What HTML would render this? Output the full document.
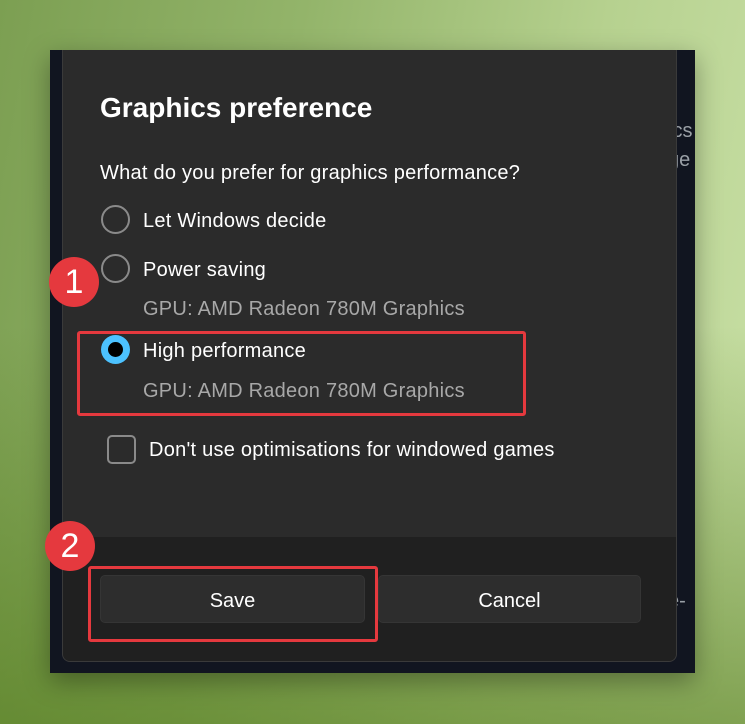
<!DOCTYPE html>
<html><head><style>
*{margin:0;padding:0;box-sizing:border-box}
body{width:745px;height:724px;overflow:hidden;position:relative;font-family:"Liberation Sans",sans-serif;
background:linear-gradient(100deg,#7c9f52 0%,#93b46a 35%,#b6d18f 70%,#c9e0a6 100%);}
.bg2{position:absolute;inset:0;background:linear-gradient(180deg,rgba(0,0,0,0) 45%,rgba(80,120,25,.6) 100%)}
.win{position:absolute;left:50px;top:50px;width:645px;height:623px;background:#111520;box-shadow:0 8px 24px rgba(0,0,0,.35)}
.side{position:absolute;color:#9aa0a6;font-size:20px;left:668px}
.dlg{position:absolute;left:62px;top:50px;width:615px;height:612px;background:#2b2b2b;border:1px solid #3a3a3a;border-top:none;border-radius:0 0 8px 8px;overflow:hidden}
.foot{position:absolute;left:0;right:0;top:487px;bottom:0;background:#202020}
.t{position:absolute;color:#fff;white-space:nowrap;font-size:20px;letter-spacing:0.25px}
.g{color:#a8a8a8}
.radio{position:absolute;width:29px;height:29px;border:2px solid #8a8a8a;border-radius:50%}
.btn{position:absolute;top:525px;height:48px;background:#2d2d2d;border:1px solid #353535;border-radius:5px;color:#fff;font-size:20px;text-align:center;line-height:50px}
.red{position:absolute;border:3px solid #e5393e;border-radius:3px}
.badge{position:absolute;width:50px;height:50px;border-radius:50%;background:#e5393e;color:#fff;font-size:34px;text-align:center;line-height:50px}
</style></head><body>
<div class="bg2"></div>
<div class="win"></div>
<div class="side" style="top:120px">ics</div>
<div class="side" style="top:149px">ge</div>
<div class="side" style="top:590px">e-</div>
<div class="dlg">
 <div class="t" style="left:37px;top:42px;font-size:28px;font-weight:bold;letter-spacing:0">Graphics preference</div>
 <div class="t" style="left:37px;top:112px">What do you prefer for graphics performance?</div>
 <div class="radio" style="left:38px;top:155px"></div>
 <div class="t" style="left:80px;top:160px">Let Windows decide</div>
 <div class="radio" style="left:38px;top:204px"></div>
 <div class="t" style="left:80px;top:209px">Power saving</div>
 <div class="t g" style="left:80px;top:248px">GPU: AMD Radeon 780M Graphics</div>
 <div class="radio" style="left:38px;top:285px;border:none;background:#4cc2ff"><div style="position:absolute;left:7px;top:7px;width:15px;height:15px;border-radius:50%;background:#000"></div></div>
 <div class="t" style="left:80px;top:290px">High performance</div>
 <div class="t g" style="left:80px;top:330px">GPU: AMD Radeon 780M Graphics</div>
 <div style="position:absolute;left:44px;top:385px;width:29px;height:29px;border:2px solid #8a8a8a;border-radius:5px"></div>
 <div class="t" style="left:86px;top:389px">Don't use optimisations for windowed games</div>
 <div class="foot"></div>
 <div class="btn" style="left:37px;width:265px">Save</div>
 <div class="btn" style="left:315px;width:263px">Cancel</div>
</div>
<div class="red" style="left:77px;top:331px;width:449px;height:85px"></div>
<div class="red" style="left:88px;top:566px;width:290px;height:76px"></div>
<div class="badge" style="left:49px;top:257px">1</div>
<div class="badge" style="left:45px;top:521px">2</div>
</body></html>
